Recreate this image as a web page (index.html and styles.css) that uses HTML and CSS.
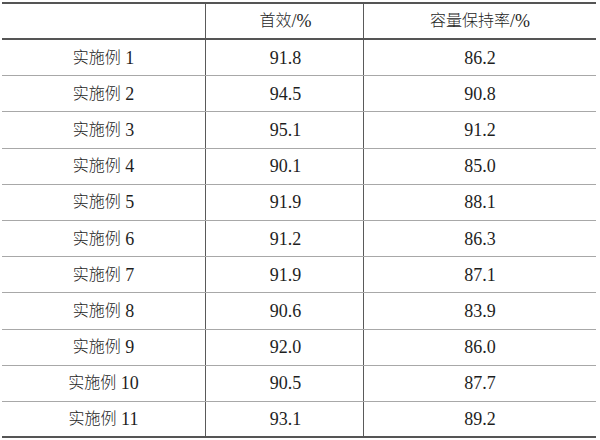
FILE: index.html
```html
<!DOCTYPE html>
<html lang="zh">
<head>
<meta charset="utf-8">
<link rel="stylesheet" href="styles.css">
</head>
<body>
<div class="table">
  <div class="row head"><div class="c c1"></div><div class="c c2"><span class="zh">首效</span>/%</div><div class="c c3"><span class="zh">容量保持率</span>/%</div></div>
  <div class="row"><div class="c c1"><span class="zh">实施例</span> 1</div><div class="c c2">91.8</div><div class="c c3">86.2</div></div>
  <div class="row"><div class="c c1"><span class="zh">实施例</span> 2</div><div class="c c2">94.5</div><div class="c c3">90.8</div></div>
  <div class="row"><div class="c c1"><span class="zh">实施例</span> 3</div><div class="c c2">95.1</div><div class="c c3">91.2</div></div>
  <div class="row"><div class="c c1"><span class="zh">实施例</span> 4</div><div class="c c2">90.1</div><div class="c c3">85.0</div></div>
  <div class="row"><div class="c c1"><span class="zh">实施例</span> 5</div><div class="c c2">91.9</div><div class="c c3">88.1</div></div>
  <div class="row"><div class="c c1"><span class="zh">实施例</span> 6</div><div class="c c2">91.2</div><div class="c c3">86.3</div></div>
  <div class="row"><div class="c c1"><span class="zh">实施例</span> 7</div><div class="c c2">91.9</div><div class="c c3">87.1</div></div>
  <div class="row"><div class="c c1"><span class="zh">实施例</span> 8</div><div class="c c2">90.6</div><div class="c c3">83.9</div></div>
  <div class="row"><div class="c c1"><span class="zh">实施例</span> 9</div><div class="c c2">92.0</div><div class="c c3">86.0</div></div>
  <div class="row"><div class="c c1"><span class="zh">实施例</span> 10</div><div class="c c2">90.5</div><div class="c c3">87.7</div></div>
  <div class="row last"><div class="c c1"><span class="zh">实施例</span> 11</div><div class="c c2">93.1</div><div class="c c3">89.2</div></div>
</div>
</body>
</html>
```
FILE: styles.css
```css
html, body {
  margin: 0;
  padding: 0;
  background: #ffffff;
}
body {
  font-family: "Liberation Serif", "Noto Sans CJK SC", serif;
  font-size: 18px;
  font-weight: 300;
  color: #1e1e1e;
}
.table {
  margin: 2px 0 0 2px;
  width: 594px;
  border-top: 2px solid #555555;
}
.row {
  display: grid;
  grid-template-columns: 203px 158px 233px;
  height: 36.2px;
  box-sizing: border-box;
  border-bottom: 1px solid #a8a8a8;
}
.row.head {
  height: 36px;
  border-bottom: 2px solid #555555;
}
.row.last {
  border-bottom: 2px solid #555555;
}
.c {
  display: flex;
  align-items: center;
  justify-content: center;
  line-height: 1;
  white-space: pre;
}
.zh {
  font-size: 16px;
}
.c2, .c3 {
  border-left: 1.5px solid #5a5a5a;
}
.c2 {
  padding-left: 2px;
}
```
